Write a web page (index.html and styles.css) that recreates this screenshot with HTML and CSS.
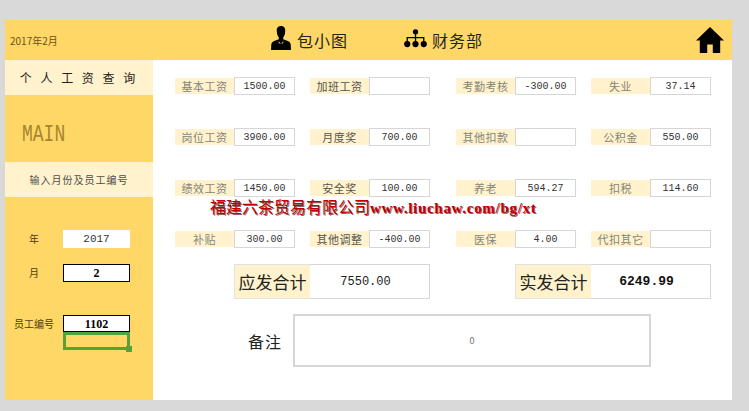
FILE: index.html
```html
<!DOCTYPE html>
<html lang="zh-CN">
<head>
    <meta charset="UTF-8">
    <title>个人工资查询</title>
    <link rel="stylesheet" href="styles.css">
</head>
<body>
    <div class="sheet">
        <!-- Top bar -->
        <header class="topbar">
            <div class="date">2017年2月</div>
            <div class="who who-name">
                <svg class="icon-person" viewBox="0 0 20 24" aria-hidden="true">
                    <path d="M10 0C6.800 0 5.600 2.200 5.800 5c.1 1.500.2 3.300 1 4.800.3.600.6 1.200 1 1.700v1.700L3.800 14.700C1.500 15.600.6 16.600.3 18.500L0 24h20l-.3-5.500c-.3-1.900-1.200-2.900-3.500-3.800l-4-1.500v-1.700c.4-.5.7-1.100 1-1.700.8-1.500.9-3.300 1-4.800C14.400 2.200 13.200 0 10 0z"/>
                    <path class="collar" d="M7.900 15.600l1.300 1.300h1.600l1.300-1.300.6.300-1.700 2.200-.6-1h-.8l-.6 1-1.700-2.200z"/>
                </svg>
                <span>包小图</span>
            </div>
            <div class="who who-dept">
                <svg class="icon-org" viewBox="0 0 24 20" aria-hidden="true">
                    <circle cx="12" cy="3" r="2.800"/>
                    <circle cx="3.300" cy="15.800" r="3.300"/>
                    <circle cx="12" cy="15.800" r="3.300"/>
                    <circle cx="20.700" cy="15.800" r="3.300"/>
                    <path d="M11.300 4h1.400v4.300h8.700V13H20V9.700h-7.300V13h-1.400V9.700H4V13H2.600V8.300h8.700z"/>
                </svg>
                <span>财务部</span>
            </div>
            <svg class="icon-home" viewBox="0 0 28 26" aria-hidden="true">
                <path d="M14 0L0 13.500h3.800V26h7.400v-8.500h5.600V26h7.400V13.500H28z"/>
            </svg>
        </header>

        <div class="content">
            <!-- Left panel -->
            <aside class="side">
                <div class="band band-title">个 人 工 资 查 询</div>
                <div class="main-word"><span>MAIN</span></div>
                <div class="band band-hint">输入月份及员工编号</div>
                <div class="form">
                    <div class="form-row">
                        <span class="form-label">年</span>
                        <span class="form-cell">2017</span>
                    </div>
                    <div class="form-row">
                        <span class="form-label">月</span>
                        <span class="form-cell boxed">2</span>
                    </div>
                    <div class="form-row row-id">
                        <span class="form-label">员工编号</span>
                        <span class="form-cell boxed">1102</span>
                    </div>
                    <div class="form-row">
                        <span class="form-label"></span>
                        <span class="selected"><i class="handle"></i></span>
                    </div>
                </div>
            </aside>

            <!-- Salary table -->
            <main class="pay">
                <div class="pay-grid">
                    <span class="lab">基本工资</span><span class="val">1500.00</span>
                    <span class="lab dark lab-2">加班工资</span><span class="val"></span>
                    <span class="lab lab-3">考勤考核</span><span class="val">-300.00</span>
                    <span class="lab lab-4">失业</span><span class="val">37.14</span>

                    <span class="lab">岗位工资</span><span class="val">3900.00</span>
                    <span class="lab dark lab-2">月度奖</span><span class="val">700.00</span>
                    <span class="lab lab-3">其他扣款</span><span class="val"></span>
                    <span class="lab lab-4">公积金</span><span class="val">550.00</span>

                    <span class="lab">绩效工资</span><span class="val">1450.00</span>
                    <span class="lab dark lab-2">安全奖</span><span class="val">100.00</span>
                    <span class="lab lab-3">养老</span><span class="val">594.27</span>
                    <span class="lab lab-4">扣税</span><span class="val">114.60</span>

                    <span class="lab">补贴</span><span class="val">300.00</span>
                    <span class="lab dark lab-2">其他调整</span><span class="val">-400.00</span>
                    <span class="lab lab-3">医保</span><span class="val">4.00</span>
                    <span class="lab lab-4">代扣其它</span><span class="val"></span>
                </div>

                <div class="totals">
                    <span class="total-lab total-a">应发合计</span>
                    <span class="total-val">7550.00</span>
                    <span class="total-lab total-b">实发合计</span>
                    <span class="total-val strong">6249.99</span>
                </div>

                <div class="note">
                    <span class="note-lab">备注</span>
                    <span class="note-box">0</span>
                </div>
            </main>
        </div>

        <!-- Watermark over the sheet -->
        <div class="stamp">福建六茶贸易有限公司<span class="stamp-url">www.liuchaw.com/bg/xt</span></div>
    </div>
</body>
</html>
```

FILE: styles.css
```css
/* Page */
body {
    margin: 0;
    height: 411px;
    overflow: hidden;
    background-color: #d9d9d9;
    font-family: "Noto Sans CJK SC", "Liberation Sans", sans-serif;
}

.sheet {
    position: relative;
    width: 727px;
    height: 380px;
    margin: 20px 0 0 5px;
    display: flex;
    flex-direction: column;
    background-color: #fff;
}

/* Top bar */
.topbar {
    height: 40px;
    flex: none;
    display: flex;
    align-items: center;
    background-color: #ffd766;
}

.date {
    width: 143px;
    padding-left: 5px;
    font-size: 10px;
    color: #6b5410;
}

.who {
    display: flex;
    align-items: center;
    font-size: 16px;
    letter-spacing: 1px;
    color: #222;
}

.who-name {
    margin-left: 118px;
    width: 133px;
    gap: 6px;
}

.who-dept {
    gap: 5px;
}

.icon-person {
    width: 20px;
    height: 24px;
    margin-top: -4px;
}

.icon-person .collar {
    fill: #ffd766;
}

.icon-org {
    width: 23px;
    height: 19px;
    margin-top: -3px;
}

.icon-home {
    width: 28px;
    height: 26px;
    margin-left: auto;
    margin-right: 8px;
}

/* Left panel */
.content {
    flex: 1;
    display: flex;
}

.side {
    width: 148px;
    flex: none;
    background-color: #ffd766;
}

.band {
    height: 35px;
    display: flex;
    align-items: center;
    justify-content: center;
    background-color: #fff2cc;
}

.band-title {
    font-size: 12px;
    letter-spacing: 3px;
    color: #222;
}

.band-hint {
    font-size: 10px;
    letter-spacing: 1px;
    color: #4d4d4d;
}

.main-word {
    height: 67px;
    box-sizing: border-box;
    padding: 10px 0 0 17px;
    display: flex;
    align-items: center;
    font-family: "Liberation Mono", monospace;
    font-size: 18px;
    color: #a5862f;
}

.main-word span {
    transform: scaleY(1.35);
}

.form {
    padding-top: 33px;
    display: flex;
    flex-direction: column;
    gap: 16px;
}

.form-row {
    display: flex;
    height: 18px;
}

.row-id {
    margin-top: 17px;
    margin-bottom: -16px;
    height: 17px;
}

.form-label {
    width: 58px;
    text-align: center;
    font-size: 10px;
    line-height: 18px;
    color: #4d3d10;
}

.form-cell {
    width: 67px;
    box-sizing: border-box;
    text-align: center;
    background-color: #fff;
    font-family: "Liberation Mono", monospace;
    font-size: 11px;
    line-height: 18px;
    color: #333;
}

.form-cell.boxed {
    border: 1px solid #000;
    font-family: "Liberation Serif", serif;
    font-size: 12px;
    font-weight: bold;
    line-height: 16px;
    color: #000;
}

.selected {
    position: relative;
    width: 67px;
    box-sizing: border-box;
    border: 3px solid #55a13b;
}

.handle {
    position: absolute;
    right: -5px;
    bottom: -5px;
    width: 6px;
    height: 6px;
    background-color: #55a13b;
}

/* Salary table */
.pay {
    flex: 1;
    padding: 17px 0 0 22px;
}

.pay-grid,
.totals {
    display: grid;
    grid-template-columns: 59px 61px 15px 59px 61px 26px 59px 61px 15px 59px 61px;
}

.pay-grid {
    grid-template-rows: repeat(4, 18px);
    row-gap: 33px;
}

.lab {
    margin: 1px 0;
    display: flex;
    align-items: center;
    justify-content: center;
    background-color: #fff2cc;
    font-size: 11px;
    letter-spacing: 0.500px;
    color: #85857a;
}

.lab.dark {
    color: #55554e;
}

.lab-2 {
    grid-column: 4;
}

.lab-3 {
    grid-column: 7;
}

.lab-4 {
    grid-column: 10;
}

.val {
    box-sizing: border-box;
    border: 1px solid #d6d6d6;
    text-align: center;
    font-family: "Liberation Mono", monospace;
    font-size: 10px;
    line-height: 17px;
    color: #333;
}

/* Totals */
.totals {
    height: 35px;
    margin-top: 16px;
}

.total-lab {
    box-sizing: border-box;
    display: flex;
    align-items: center;
    justify-content: center;
    background-color: #fff2cc;
    border: 1px solid #e2e2e2;
    border-right: 0;
    font-size: 17px;
    color: #222;
}

.total-a {
    grid-column: 2 / span 2;
}

.total-b {
    grid-column: 7 / span 3;
    margin-left: 59px;
}

.total-val {
    grid-column: span 2;
    box-sizing: border-box;
    padding-right: 8px;
    display: flex;
    align-items: center;
    justify-content: center;
    border: 1px solid #d6d6d6;
    border-left: 0;
    font-family: "Liberation Mono", monospace;
    font-size: 12px;
    color: #222;
}

.total-val.strong {
    font-size: 13px;
    font-weight: bold;
    color: #111;
}

/* Note */
.note {
    margin-top: 15px;
    padding-left: 73px;
    display: flex;
    align-items: center;
    gap: 11px;
}

.note-lab {
    width: 34px;
    font-size: 16px;
    letter-spacing: 1px;
    color: #222;
}

.note-box {
    width: 358px;
    height: 53px;
    box-sizing: border-box;
    display: flex;
    align-items: center;
    justify-content: center;
    border: 2px solid #d6d6d6;
    font-size: 9px;
    color: #777;
}

/* Watermark */
.stamp {
    position: absolute;
    left: 205px;
    top: 178px;
    font-size: 16px;
    line-height: 16px;
    white-space: nowrap;
    color: #c00000;
    text-shadow: 1px 1px 0 rgba(60, 0, 0, 0.6);
}

.stamp-url {
    font-family: "Liberation Serif", serif;
    font-weight: bold;
    font-size: 15px;
    letter-spacing: 0.700px;
}
```
